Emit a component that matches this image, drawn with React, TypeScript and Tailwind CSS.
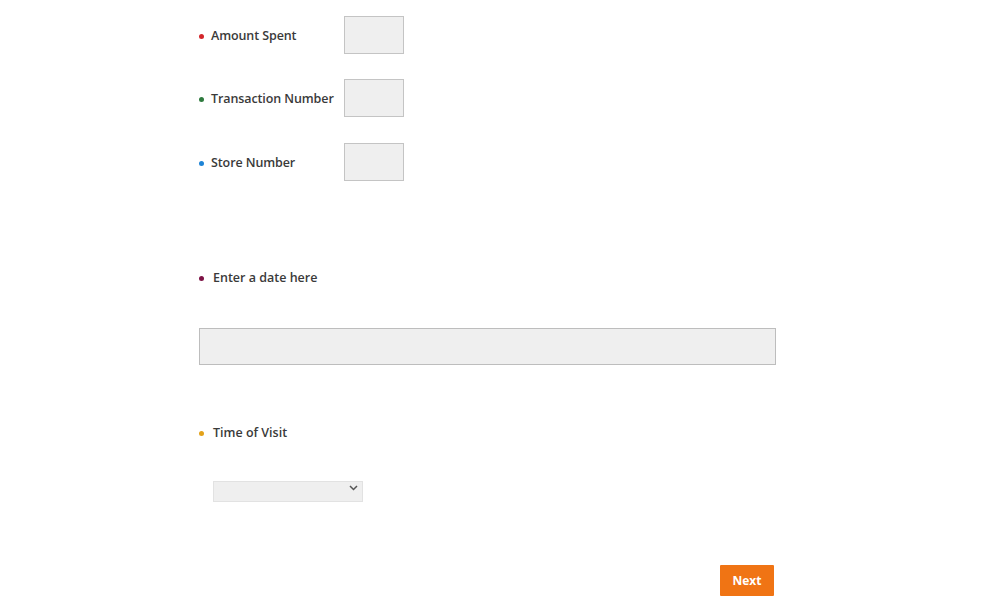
import React, { useState } from 'react';

interface Field {
  label: string;
  dot: string;
  top: string;
}

const fields: Field[] = [
  { label: 'Amount Spent', dot: 'bg-[#d3262b]', top: 'mt-[16px]' },
  { label: 'Transaction Number', dot: 'bg-[#2e7a3e]', top: 'mt-[25px]' },
  { label: 'Store Number', dot: 'bg-[#1e84d6]', top: 'mt-[26px]' },
];

const App = () => {
  const [values, setValues] = useState<string[]>(['', '', '']);
  const [date, setDate] = useState('');
  const [time, setTime] = useState('');

  return (
    <div className="min-h-screen w-[1000px] h-[600px] overflow-hidden bg-white font-['Open_Sans',sans-serif] text-[#3a3a3a]">
      <div className="pl-[199px] w-[776px] flex flex-col">
        {/* short inputs */}
        {fields.map((f, i) => (
          <div key={f.label} className={`flex items-center ${f.top}`}>
            <div className="w-[145px] flex items-center pt-[2px]">
              <span className={`w-[5px] h-[5px] rounded-full ${f.dot}`} />
              <span className="ml-[7px] text-[12.5px] font-semibold leading-[20px] whitespace-nowrap tracking-[-0.1px]">{f.label}</span>
            </div>
            <input
              value={values[i]}
              onChange={(e) => setValues(values.map((v, j) => (j === i ? e.target.value : v)))}
              className="w-[60px] h-[38px] bg-[#efefef] border border-[#c4c4c4] outline-none"
            />
          </div>
        ))}

        {/* date */}
        <div className="flex items-center mt-[87px]">
          <span className="w-[5px] h-[5px] rounded-full bg-[#7d1245]" />
          <span className="ml-[9px] text-[12.5px] font-semibold leading-[20px]">Enter a date here</span>
        </div>
        <input
          value={date}
          onChange={(e) => setDate(e.target.value)}
          className="mt-[40px] w-[577px] h-[37px] bg-[#efefef] border border-[#bdbdbd] outline-none"
        />

        {/* time */}
        <div className="flex items-center mt-[58px]">
          <span className="w-[5px] h-[5px] rounded-full bg-[#e3a21a]" />
          <span className="ml-[9px] text-[12.5px] font-semibold leading-[20px]">Time of Visit</span>
        </div>
        <div className="relative mt-[34px] ml-[14px] w-[150px] h-[21px]">
          <select
            value={time}
            onChange={(e) => setTime(e.target.value)}
            className="appearance-none w-full h-full bg-[#efefef] border border-[#e2e2e2] outline-none text-[12px]"
          >
            <option value=""></option>
            <option value="morning">Morning</option>
            <option value="afternoon">Afternoon</option>
            <option value="evening">Evening</option>
          </select>
          <svg className="absolute right-[5px] top-[8px] pointer-events-none" width="9" height="6" viewBox="0 0 9 6">
            <path d="M1 1l3.5 3.5L8 1" fill="none" stroke="#555" strokeWidth="1.5" />
          </svg>
        </div>

        {/* next */}
        <div className="flex justify-end mt-[67px] pr-[2px]">
          <button className="w-[54px] h-[31px] bg-[#f07414] text-white text-[12px] font-bold rounded-[1px]">Next</button>
        </div>
      </div>
    </div>
  );
};

export default App;
